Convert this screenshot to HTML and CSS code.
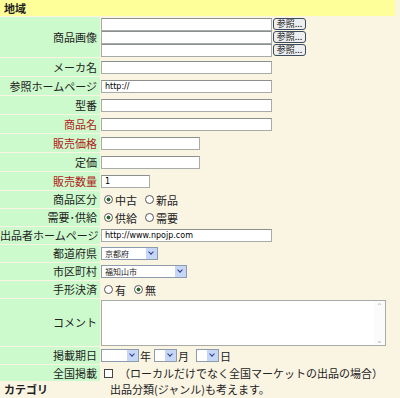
FILE: index.html
```html
<!DOCTYPE html>
<html>
<head>
    <title>出品登録</title>
    <link rel="stylesheet" href="styles.css">
</head>
<body>
    <div class="area-head">地域</div>

    <div class="form">
        <div class="label tall">商品画像</div>
        <div class="value files">
            <div class="file"><input type="text" class="txt wide"><button class="browse">参照...</button></div>
            <div class="file"><input type="text" class="txt wide"><button class="browse">参照...</button></div>
            <div class="file"><input type="text" class="txt wide"><button class="browse">参照...</button></div>
        </div>

        <div class="label">メーカ名</div>
        <div class="value"><input type="text" class="txt wide"></div>

        <div class="label">参照ホームページ</div>
        <div class="value"><input type="text" class="txt wide" value="http://"></div>

        <div class="label">型番</div>
        <div class="value"><input type="text" class="txt wide"></div>

        <div class="label req">商品名</div>
        <div class="value"><input type="text" class="txt wide"></div>

        <div class="label req">販売価格</div>
        <div class="value"><input type="text" class="txt mid"></div>

        <div class="label">定価</div>
        <div class="value"><input type="text" class="txt mid"></div>

        <div class="label req">販売数量</div>
        <div class="value"><input type="text" class="txt short" value="1"></div>

        <div class="label low">商品区分</div>
        <div class="value low">
            <label class="opt"><input type="radio" name="kubun" checked>中古</label>
            <label class="opt"><input type="radio" name="kubun">新品</label>
        </div>

        <div class="label low">需要･供給</div>
        <div class="value low">
            <label class="opt"><input type="radio" name="demand" checked>供給</label>
            <label class="opt"><input type="radio" name="demand">需要</label>
        </div>

        <div class="label low">出品者ホームページ</div>
        <div class="value low"><input type="text" class="txt wide" value="http://www.npojp.com"></div>

        <div class="label low">都道府県</div>
        <div class="value low">
            <div class="sel pref"><span class="sel-text">京都府</span><span class="sel-btn"></span></div>
        </div>

        <div class="label low">市区町村</div>
        <div class="value low">
            <div class="sel city"><span class="sel-text">福知山市</span><span class="sel-btn"></span></div>
        </div>

        <div class="label low">手形決済</div>
        <div class="value low">
            <label class="opt"><input type="radio" name="tegata">有</label>
            <label class="opt"><input type="radio" name="tegata" checked>無</label>
        </div>

        <div class="label comment-label">コメント</div>
        <div class="value comment">
            <div class="memo">
                <div class="memo-bar"><span class="up">&#8963;</span><span class="down">&#8964;</span></div>
            </div>
        </div>

        <div class="label low">掲載期日</div>
        <div class="value low dates">
            <div class="sel year"><span class="sel-text"></span><span class="sel-btn"></span></div><span class="unit">年</span>
            <div class="sel month"><span class="sel-text"></span><span class="sel-btn"></span></div><span class="unit">月</span>
            <div class="sel day"><span class="sel-text"></span><span class="sel-btn"></span></div><span class="unit">日</span>
        </div>

        <div class="label lower">全国掲載</div>
        <div class="value lower">
            <span class="check"></span><span class="note">（ローカルだけでなく全国マーケットの出品の場合）</span>
        </div>
    </div>

    <div class="category">
        <b>カテゴリ</b>
        <span class="cat-note">出品分類(ジャンル)も考えます。</span>
    </div>
</body>
</html>
```

FILE: styles.css
```css
body {
    margin: 0;
    width: 400px;
    height: 398px;
    overflow: hidden;
    font-family: "Noto Sans CJK JP", "Liberation Sans", sans-serif;
    font-size: 11px;
    color: #222;
    background: #faf4e2;
}

.area-head {
    width: 391px;
    height: 16px;
    line-height: 16px;
    padding-left: 4px;
    background: #ffff99;
    font-weight: bold;
    font-size: 11px;
    margin-bottom: 1px;
}

.form {
    display: grid;
    grid-template-columns: 100px 1fr;
    row-gap: 1px;
}

.label {
    background: #ccfacc;
    text-align: right;
    padding-right: 3px;
    height: 18px;
    line-height: 18px;
    white-space: nowrap;
}

.label.req {
    color: #b31b1b;
}

.label.tall {
    height: 40px;
    line-height: 40px;
}

.value {
    display: flex;
    align-items: center;
    padding-left: 1px;
    height: 18px;
}

.label.low {
    height: 17px;
    line-height: 17px;
}

.value.low {
    height: 17px;
}

.label.lower {
    height: 16px;
    line-height: 16px;
}

.value.lower {
    height: 16px;
}

.value.files {
    flex-direction: column;
    align-items: flex-start;
    justify-content: center;
    height: 40px;
}

.file {
    display: flex;
    align-items: center;
    height: 13px;
}

.txt {
    box-sizing: border-box;
    height: 13px;
    padding: 0 3px;
    border: 1px solid #a8aca8;
    border-top-color: #8c908c;
    background: #fff;
    font-family: "DejaVu Sans", sans-serif;
    font-size: 8px;
    color: #000;
    outline: none;
}

.wide { width: 171px; }
.mid { width: 99px; }
.short { width: 49px; }

.browse {
    box-sizing: border-box;
    width: 33px;
    height: 12px;
    margin-left: 1px;
    padding: 0;
    border: 1px solid #3c4c5c;
    border-radius: 3px;
    background: #eceef0;
    font-family: "Noto Sans CJK JP", sans-serif;
    font-size: 9px;
    line-height: 10px;
    color: #111;
}

.opt {
    display: flex;
    align-items: center;
    margin-right: 5px;
}

.opt input {
    appearance: none;
    width: 9px;
    height: 9px;
    margin: 0 2px 0 3px;
    border: 1px solid #555;
    border-radius: 50%;
    background: #fff;
}

.opt input:checked {
    background: radial-gradient(circle, #2a6a2a 0 1.8px, #fff 2.2px);
}

.sel {
    box-sizing: border-box;
    display: flex;
    height: 13px;
    border: 1px solid #8c9cac;
    background: #fff;
}

.sel-text {
    flex: 1;
    padding-left: 3px;
    font-size: 8px;
    line-height: 11px;
}

.sel-btn {
    width: 11px;
    background: #c6d6f6;
    border-left: 1px solid #fff;
    position: relative;
}

.sel-btn::after {
    content: "";
    position: absolute;
    left: 3px;
    top: 2px;
    width: 3px;
    height: 3px;
    border-right: 1.5px solid #2a3a8a;
    border-bottom: 1.5px solid #2a3a8a;
    transform: rotate(45deg);
}

.pref { width: 57px; }
.city { width: 86px; }
.year { width: 38px; }
.month { width: 23px; }
.day { width: 23px; }

.dates .unit {
    margin: 0 1px;
}

.dates .month {
    margin-left: 2px;
}

.dates .day {
    margin-left: 6px;
}

.comment-label,
.value.comment {
    height: 47px;
}

.comment-label {
    line-height: 47px;
}

.memo {
    box-sizing: border-box;
    width: 285px;
    height: 46px;
    border: 1px solid #a8aca8;
    background: #fff;
    display: flex;
    justify-content: flex-end;
}

.memo-bar {
    width: 11px;
    display: flex;
    flex-direction: column;
    justify-content: space-between;
    align-items: center;
    color: #b0b8c8;
    font-size: 8px;
    line-height: 10px;
    background: #fbfbfb;
}

.check {
    display: inline-block;
    box-sizing: border-box;
    width: 9px;
    height: 9px;
    margin: 0 6px 0 3px;
    border: 1px solid #444;
    background: #fff;
}

.category {
    display: flex;
    height: 15px;
    line-height: 14px;
    margin-top: 1px;
}

.category b {
    width: 106px;
    padding-left: 4px;
}
```
